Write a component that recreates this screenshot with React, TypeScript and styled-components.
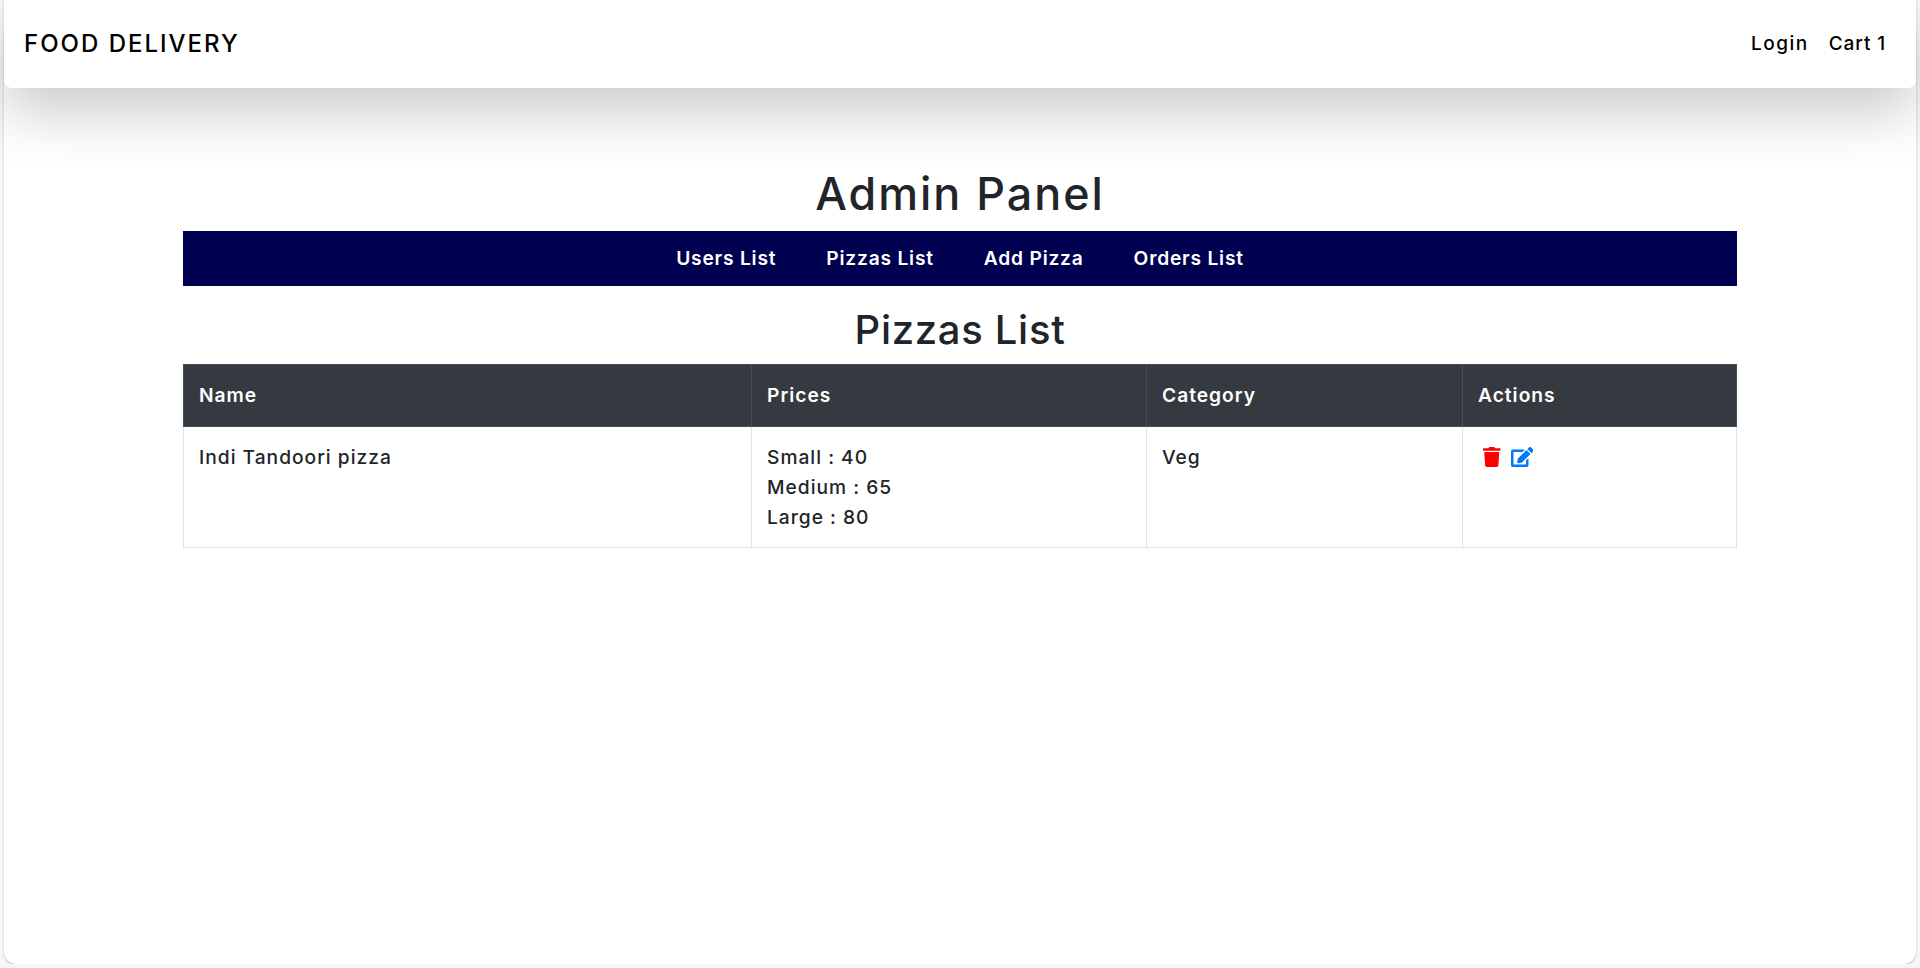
import React from "react";
import styled, { createGlobalStyle } from "styled-components";
import { FaTrash, FaEdit } from "react-icons/fa";

const GlobalStyle = createGlobalStyle`
  * {
    box-sizing: border-box;
  }
  html, body {
    margin: 0;
    padding: 0;
    background: #f6f6f6;
    font-family: Inter, "Open Sans", "Liberation Sans", sans-serif;
    color: #212529;
  }
`;

const Page = styled.div`
  height: 964px;
  margin: 0 4px;
  background: #fff;
  border-radius: 0 0 12px 12px;
  box-shadow: 0 1px 2px rgba(0, 0, 0, 0.25);
`;

const Navbar = styled.nav`
  height: 88px;
  padding: 0 30px 0 20px;
  display: flex;
  align-items: center;
  justify-content: space-between;
  background: #fff;
  border-radius: 0 0 8px 8px;
  box-shadow: 0 26px 56px rgba(0, 0, 0, 0.2);
`;

const Brand = styled.a`
  font-size: 24px;
  font-weight: 500;
  letter-spacing: 2px;
  color: #000;
  margin-bottom: 2px;
`;

const NavLinks = styled.div`
  display: flex;
  gap: 20px;
  margin-bottom: 2px;
`;

const NavLink = styled.a<{ $spacing: number }>`
  font-size: 19px;
  font-weight: 500;
  letter-spacing: ${(p) => p.$spacing}px;
  color: #000;
`;

const Main = styled.main`
  width: 1554px;
  margin: 0 auto;
  padding-top: 80px;
`;

const Title = styled.h1<{ $size: number; $spacing: number; $gap: number }>`
  margin: 0 0 ${(p) => p.$gap}px;
  font-size: ${(p) => p.$size}px;
  letter-spacing: ${(p) => p.$spacing}px;
  line-height: 1.2;
  font-weight: 500;
  text-align: center;
`;

const AdminBar = styled.div`
  height: 55px;
  margin-bottom: 20px;
  display: flex;
  justify-content: center;
  align-items: center;
  gap: 50px;
  background: #000050;
`;

const AdminLink = styled.a`
  font-size: 19.2px;
  font-weight: 600;
  letter-spacing: 0.8px;
  color: #fff;
`;

const Table = styled.table`
  width: 1553px;
  border-collapse: collapse;
  table-layout: fixed;
  font-size: 19.2px;
  letter-spacing: 1px;
`;

const HeadCell = styled.th<{ $width: number }>`
  width: ${(p) => p.$width}px;
  padding: 15px 15px 16px 15px;
  text-align: left;
  font-weight: 600;
  line-height: 30px;
  color: #fff;
  background: #343a40;
  border: 1px solid #454d55;
`;

const Cell = styled.td`
  padding: 15px;
  vertical-align: top;
  font-weight: 500;
  line-height: 30px;
  border: 1px solid #dee2e6;
`;

const PriceLine = styled.div``;

const Actions = styled.div`
  display: flex;
  align-items: center;
  gap: 10px;
  height: 30px;
  padding-left: 5px;
`;

const TrashIcon = styled(FaTrash)`
  width: 17.5px;
  height: 20px;
  color: #ff0000;
`;

const EditIcon = styled(FaEdit)`
  width: 22.5px;
  height: 20px;
  color: #007bff;
`;

const prices = [
  { label: "Small", value: 40 },
  { label: "Medium", value: 65 },
  { label: "Large", value: 80 },
];

export default function App() {
  return (
    <>
      <GlobalStyle />
      <Page>
        <Navbar>
          <Brand>FOOD DELIVERY</Brand>
          <NavLinks>
            <NavLink $spacing={1.5}>Login</NavLink>
            <NavLink $spacing={0.9}>Cart 1</NavLink>
          </NavLinks>
        </Navbar>
        <Main>
          <Title $size={44.8} $spacing={2} $gap={9}>
            Admin Panel
          </Title>
          <AdminBar>
            <AdminLink>Users List</AdminLink>
            <AdminLink>Pizzas List</AdminLink>
            <AdminLink>Add Pizza</AdminLink>
            <AdminLink>Orders List</AdminLink>
          </AdminBar>
          <Title $size={40} $spacing={0.7} $gap={10}>
            Pizzas List
          </Title>
          <Table>
            <thead>
              <tr>
                <HeadCell $width={568}>Name</HeadCell>
                <HeadCell $width={395}>Prices</HeadCell>
                <HeadCell $width={316}>Category</HeadCell>
                <HeadCell $width={274}>Actions</HeadCell>
              </tr>
            </thead>
            <tbody>
              <tr>
                <Cell>Indi Tandoori pizza</Cell>
                <Cell>
                  {prices.map((p) => (
                    <PriceLine key={p.label}>
                      {p.label} : {p.value}
                    </PriceLine>
                  ))}
                </Cell>
                <Cell>Veg</Cell>
                <Cell>
                  <Actions>
                    <TrashIcon />
                    <EditIcon />
                  </Actions>
                </Cell>
              </tr>
            </tbody>
          </Table>
        </Main>
      </Page>
    </>
  );
}
